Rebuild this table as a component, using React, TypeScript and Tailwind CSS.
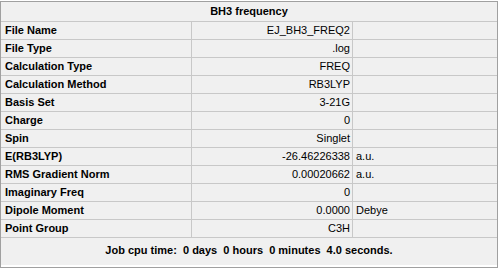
const rows: [string, string, string][] = [
  ["File Name", "EJ_BH3_FREQ2", ""],
  ["File Type", ".log", ""],
  ["Calculation Type", "FREQ", ""],
  ["Calculation Method", "RB3LYP", ""],
  ["Basis Set", "3-21G", ""],
  ["Charge", "0", ""],
  ["Spin", "Singlet", ""],
  ["E(RB3LYP)", "-26.46226338", "a.u."],
  ["RMS Gradient Norm", "0.00020662", "a.u."],
  ["Imaginary Freq", "0", ""],
  ["Dipole Moment", "0.0000", "Debye"],
  ["Point Group", "C3H", ""],
];

export default function App() {
  return (
    <div
      className="w-[500px] h-[271px] bg-white pt-px text-[11px] text-black"
      style={{ fontFamily: '"Liberation Sans", Arial, sans-serif' }}
    >
      <div className="w-[498px] h-[267px] border border-[#a0a0a0] bg-[#f0f0f0] flex flex-col">
        <div className="h-[20px] shrink-0 border-b border-[#c8c8c8] flex items-center justify-center font-bold">
          BH3 frequency
        </div>
        {rows.map(([label, value, unit]) => (
          <div
            key={label}
            className="h-[18px] shrink-0 border-b border-[#c8c8c8] flex items-center"
          >
            <div className="w-[191px] h-full border-r border-[#c8c8c8] pl-[4px] flex items-center font-bold">
              {label}
            </div>
            <div className="w-[161px] h-full border-r border-[#c8c8c8] pr-[2px] flex items-center justify-end">
              {value}
            </div>
            <div className="flex-1 h-full pl-[3px] flex items-center">{unit}</div>
          </div>
        ))}
        <div className="flex-1 flex items-center justify-center font-bold whitespace-pre border-b-2 border-white pb-[2px]">
          {"Job cpu time:  0 days  0 hours  0 minutes  4.0 seconds."}
        </div>
      </div>
    </div>
  );
}
